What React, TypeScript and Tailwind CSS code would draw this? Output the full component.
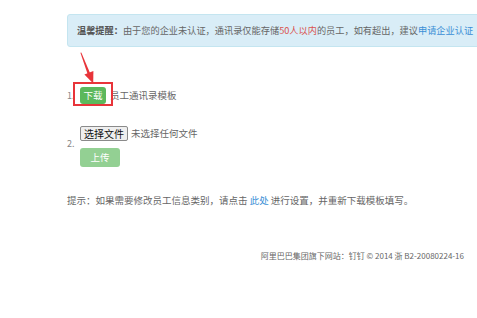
import React from 'react';

const font = "font-['Noto_Sans_CJK_SC','Noto_Sans',sans-serif]";

export default function App() {
    return (
        <div className={`relative w-[477px] h-[318px] overflow-hidden bg-white text-[9.5px] text-[#666] ${font}`}>
            <div className="pl-[67px] pt-[14px]">
                <div className="w-[440px] h-[33px] rounded-[3px] border border-[#c4e5f0] bg-[#d9edf7] flex items-center pl-[9px] whitespace-nowrap text-[9.2px]">
                    <span className="font-bold text-[#555]">温馨提醒：</span>
                    <span>由于您的企业未认证，通讯录仅能存储</span>
                    <span className="text-[#d9534f]">50人以内</span>
                    <span>的员工，如有超出，建议</span>
                    <span className="text-[#3b8fd6]">申请企业认证</span>
                </div>

                <div className="mt-[39px] flex items-center h-[19px]">
                    <span className="w-[13px] text-[9px] text-[#888]">1.</span>
                    <div className="flex items-center gap-[4px]">
                        <button className="w-[26px] h-[17px] rounded-[3px] bg-[#5cb85c] text-white text-[9.5px] leading-none">下载</button>
                        <span>员工通讯录模板</span>
                    </div>
                </div>

                <div className="mt-[21px] flex items-center">
                    <span className="w-[13px] text-[9px] text-[#888] pb-[6px]">2.</span>
                    <div className="flex flex-col gap-[7px]">
                        <div className="flex items-center gap-[3px]">
                            <span className="w-[48px] h-[15px] flex items-center justify-center rounded-[2px] border border-[#8a8a8a] bg-[#efefef] text-[#111] text-[10px]">选择文件</span>
                            <span>未选择任何文件</span>
                        </div>
                        <button className="w-[40px] h-[19px] rounded-[3px] bg-[#93d093] text-white text-[9.5px] leading-none">上传</button>
                    </div>
                </div>

                <p className="mt-[26px] whitespace-nowrap">
                    提示：如果需要修改员工信息类别，请点击 <span className="text-[#3b8fd6]">此处</span> 进行设置，并重新下载模板填写。
                </p>
            </div>

            <div className="mt-[43px] pr-[13px] flex justify-end text-[8px] text-[#666] whitespace-nowrap">
                阿里巴巴集团旗下网站：钉钉 © 2014 浙 B2-20080224-16
            </div>

            <div className="absolute left-[73px] top-[82px] w-[40px] h-[24px] border-2 border-[#e8343a]" />
            <svg className="absolute left-0 top-0" width="120" height="100" viewBox="0 0 120 100">
                <polygon points="80.4,52.8 81.3,52.4 90,73 87.6,74" fill="#e8343a" />
                <polygon points="84.4,74.6 93.4,71 93.2,83.5" fill="#e8343a" />
            </svg>
        </div>
    );
}
